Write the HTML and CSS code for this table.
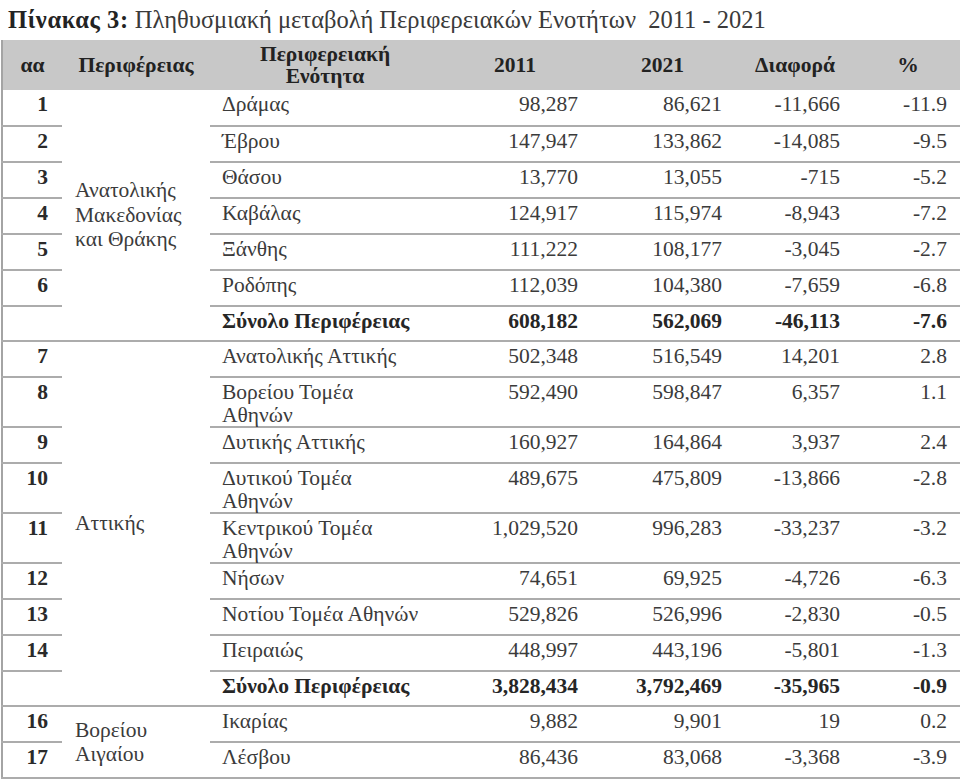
FILE: index.html
```html
<!DOCTYPE html>
<html lang="el">
<head>
<meta charset="utf-8">
<title>Πίνακας 3</title>
<link rel="stylesheet" href="styles.css">
</head>
<body>
<div class="title"><b>Πίνακας 3:</b> Πληθυσμιακή μεταβολή Περιφερειακών Ενοτήτων&nbsp; 2011 - 2021</div>
<table class="pop">
<colgroup>
<col class="c-aa"><col class="c-reg"><col class="c-unit"><col class="c-n1"><col class="c-n2"><col class="c-n3"><col class="c-n4">
</colgroup>
<thead>
<tr><th>αα</th><th>Περιφέρειας</th><th>Περιφερειακή<br>Ενότητα</th><th>2011</th><th>2021</th><th>Διαφορά</th><th>%</th></tr>
</thead>
<tbody>
<tr><td class="aa">1</td><td class="reg" rowspan="7">Ανατολικής<br>Μακεδονίας<br>και Θράκης</td><td class="unit">Δράμας</td><td class="n1">98,287</td><td class="n2">86,621</td><td class="n3">-11,666</td><td class="n4">-11.9</td></tr>
<tr><td class="aa">2</td><td class="unit">Έβρου</td><td class="n1">147,947</td><td class="n2">133,862</td><td class="n3">-14,085</td><td class="n4">-9.5</td></tr>
<tr><td class="aa">3</td><td class="unit">Θάσου</td><td class="n1">13,770</td><td class="n2">13,055</td><td class="n3">-715</td><td class="n4">-5.2</td></tr>
<tr><td class="aa">4</td><td class="unit">Καβάλας</td><td class="n1">124,917</td><td class="n2">115,974</td><td class="n3">-8,943</td><td class="n4">-7.2</td></tr>
<tr><td class="aa">5</td><td class="unit">Ξάνθης</td><td class="n1">111,222</td><td class="n2">108,177</td><td class="n3">-3,045</td><td class="n4">-2.7</td></tr>
<tr><td class="aa">6</td><td class="unit">Ροδόπης</td><td class="n1">112,039</td><td class="n2">104,380</td><td class="n3">-7,659</td><td class="n4">-6.8</td></tr>
<tr class="total"><td class="aa"></td><td class="unit">Σύνολο Περιφέρειας</td><td class="n1">608,182</td><td class="n2">562,069</td><td class="n3">-46,113</td><td class="n4">-7.6</td></tr>
<tr><td class="aa">7</td><td class="reg" rowspan="9">Αττικής</td><td class="unit">Ανατολικής Αττικής</td><td class="n1">502,348</td><td class="n2">516,549</td><td class="n3">14,201</td><td class="n4">2.8</td></tr>
<tr><td class="aa">8</td><td class="unit">Βορείου Τομέα<br>Αθηνών</td><td class="n1">592,490</td><td class="n2">598,847</td><td class="n3">6,357</td><td class="n4">1.1</td></tr>
<tr><td class="aa">9</td><td class="unit">Δυτικής Αττικής</td><td class="n1">160,927</td><td class="n2">164,864</td><td class="n3">3,937</td><td class="n4">2.4</td></tr>
<tr><td class="aa">10</td><td class="unit">Δυτικού Τομέα<br>Αθηνών</td><td class="n1">489,675</td><td class="n2">475,809</td><td class="n3">-13,866</td><td class="n4">-2.8</td></tr>
<tr><td class="aa">11</td><td class="unit">Κεντρικού Τομέα<br>Αθηνών</td><td class="n1">1,029,520</td><td class="n2">996,283</td><td class="n3">-33,237</td><td class="n4">-3.2</td></tr>
<tr><td class="aa">12</td><td class="unit">Νήσων</td><td class="n1">74,651</td><td class="n2">69,925</td><td class="n3">-4,726</td><td class="n4">-6.3</td></tr>
<tr><td class="aa">13</td><td class="unit">Νοτίου Τομέα Αθηνών</td><td class="n1">529,826</td><td class="n2">526,996</td><td class="n3">-2,830</td><td class="n4">-0.5</td></tr>
<tr><td class="aa">14</td><td class="unit">Πειραιώς</td><td class="n1">448,997</td><td class="n2">443,196</td><td class="n3">-5,801</td><td class="n4">-1.3</td></tr>
<tr class="total"><td class="aa"></td><td class="unit">Σύνολο Περιφέρειας</td><td class="n1">3,828,434</td><td class="n2">3,792,469</td><td class="n3">-35,965</td><td class="n4">-0.9</td></tr>
<tr><td class="aa">16</td><td class="reg" rowspan="2">Βορείου<br>Αιγαίου</td><td class="unit">Ικαρίας</td><td class="n1">9,882</td><td class="n2">9,901</td><td class="n3">19</td><td class="n4">0.2</td></tr>
<tr><td class="aa">17</td><td class="unit">Λέσβου</td><td class="n1">86,436</td><td class="n2">83,068</td><td class="n3">-3,368</td><td class="n4">-3.9</td></tr>
</tbody>
</table>
</body>
</html>
```

FILE: styles.css
```css
html, body {
  margin: 0;
  padding: 0;
  background: #ffffff;
}

body {
  font-family: "Liberation Serif", "DejaVu Serif", serif;
  color: #3b3b3b;
  overflow: hidden;
}

.title {
  height: 40px;
  padding-left: 8px;
  font-size: 24.5px;
  line-height: 40px;
  color: #3a3a3a;
  white-space: nowrap;
}

.title b {
  color: #232323;
  letter-spacing: 0.6px;
}

.pop {
  margin-left: 1px;
  border-collapse: collapse;
  table-layout: fixed;
  width: 959px;
  border-left: 2px solid #a4a4a4;
  font-size: 21.5px;
}

.c-aa { width: 60px; }
.c-reg { width: 148px; }
.c-unit { width: 230px; }
.c-n1 { width: 150px; }
.c-n2 { width: 145px; }
.c-n3 { width: 120px; }
.c-n4 { width: 106px; }

.pop th {
  background: #c8c8c8;
  color: #222222;
  font-weight: bold;
  height: 50px;
  padding: 0;
  line-height: 22px;
  text-align: center;
  vertical-align: middle;
}

.pop tbody tr {
  height: 36px;
}

.pop tbody tr.total {
  height: 35px;
}

.pop td {
  padding: 3px 0 0 0;
  line-height: 22.5px;
  vertical-align: top;
  border-bottom: 2px solid #acacac;
  white-space: nowrap;
}

.pop td.reg {
  vertical-align: middle;
  padding: 0 0 0 13px;
  line-height: 24.5px;
}

.pop td.aa {
  text-align: right;
  padding-right: 14px;
  font-weight: bold;
  color: #2a2a2a;
}

.pop td.unit {
  padding-left: 12px;
}

.pop td.n1 { text-align: right; padding-right: 12px; }
.pop td.n2 { text-align: right; padding-right: 13px; }
.pop td.n3 { text-align: right; padding-right: 15px; }
.pop td.n4 { text-align: right; padding-right: 14px; }

.pop tr.total td {
  font-weight: bold;
  color: #262626;
}
```
